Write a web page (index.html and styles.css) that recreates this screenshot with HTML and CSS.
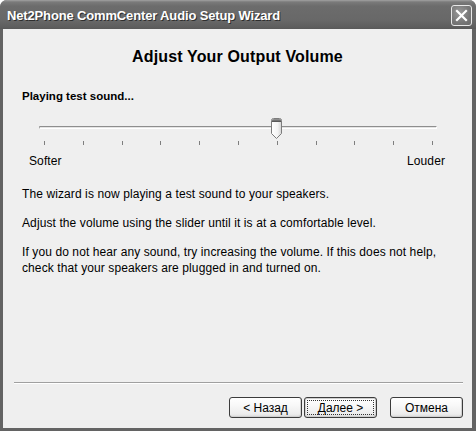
FILE: index.html
```html
<!DOCTYPE html>
<html>
<head>
<meta charset="utf-8">
<link rel="stylesheet" href="styles.css">
</head>
<body>
<div class="window">
  <div class="titlebar">
    <span class="title">Net2Phone CommCenter Audio Setup Wizard</span>
    <span class="close">
      <svg width="13" height="13" viewBox="0 0 13 13"><path d="M2 2 L11 11 M11 2 L2 11" stroke="#fff" stroke-width="2.2" stroke-linecap="square"/></svg>
    </span>
  </div>
  <div class="client">
    <h1 class="heading">Adjust Your Output Volume</h1>
    <div class="status">Playing test sound...</div>
    <div class="slider">
      <div class="track"></div>
      <div class="ticks">
        <span></span><span></span><span></span><span></span><span></span><span></span><span></span><span></span><span></span><span></span><span></span>
      </div>
      <svg class="thumb" width="11" height="21" viewBox="0 0 11 21">
        <defs>
          <linearGradient id="cap" x1="0" y1="0" x2="0" y2="1">
            <stop offset="0" stop-color="#9a9a9a"/>
            <stop offset="1" stop-color="#4c4c4c"/>
          </linearGradient>
          <linearGradient id="body" x1="0" y1="0" x2="1" y2="0">
            <stop offset="0" stop-color="#ffffff"/>
            <stop offset="0.6" stop-color="#f4f4f4"/>
            <stop offset="1" stop-color="#d4d4d4"/>
          </linearGradient>
        </defs>
        <path d="M0.5 2.5 Q0.5 0.5 2.5 0.5 H8.5 Q10.5 0.5 10.5 2.5 V15.5 L5.5 20.5 L0.5 15.5 Z" fill="url(#body)" stroke="#7c7c7c"/>
        <path d="M1 2.5 Q1 1 2.5 1 H8.5 Q10 1 10 2.5 V4 H1 Z" fill="url(#cap)"/>
      </svg>
    </div>
    <div class="scale-labels">
      <span>Softer</span>
      <span>Louder</span>
    </div>
    <p class="text">The wizard is now playing a test sound to your speakers.</p>
    <p class="text">Adjust the volume using the slider until it is at a comfortable level.</p>
    <p class="text">If you do not hear any sound, try increasing the volume. If this does not help,<br>check that your speakers are plugged in and turned on.</p>
    <div class="footer">
      <div class="separator"></div>
      <div class="buttons">
        <button class="btn">&lt; Назад</button>
        <button class="btn focused"><span class="focus">Далее &gt;</span></button>
        <button class="btn cancel">Отмена</button>
      </div>
    </div>
  </div>
</div>
</body>
</html>
```

FILE: styles.css
```css
* { box-sizing: border-box; }
html, body { margin: 0; padding: 0; background: #ffffff; }
body { width: 476px; height: 431px; overflow: hidden; font-family: "Liberation Sans", Arial, sans-serif; }

.window {
  width: 476px;
  height: 431px;
  display: flex;
  flex-direction: column;
  background: #636363;
  border-radius: 7px 7px 0 0;
  overflow: hidden;
}

.titlebar {
  height: 29px;
  flex: none;
  display: flex;
  align-items: center;
  justify-content: space-between;
  padding: 0 4px 0 7px;
  background: linear-gradient(to bottom, #a2a2a2 0, #7a7a7a 2px, #6c6c6c 6px, #686868 20px, #5e5e5e 27px, #585858 29px);
}

.title {
  color: #ffffff;
  font-weight: bold;
  font-size: 13px;
  letter-spacing: -0.15px;
  text-shadow: 1px 1px 0 #2e2e2e;
  padding-top: 1px;
}

.close {
  width: 21px;
  height: 21px;
  border: 1px solid #e8e8e8;
  border-radius: 3px;
  background: radial-gradient(circle at 40% 35%, #9a9a9a 0, #777777 60%, #6a6a6a 100%);
  display: flex;
  align-items: center;
  justify-content: center;
  margin-top: 2px;
}

.client {
  flex: 1;
  margin: 0 4px 3px 3px;
  background: #efefef;
  display: flex;
  flex-direction: column;
  color: #000;
}

.heading {
  margin: 18px 0 0 0;
  font-size: 16px;
  line-height: 20px;
  font-weight: bold;
  text-align: center;
  letter-spacing: 0.15px;
}

.status {
  margin: 22px 0 0 19px;
  font-size: 11.5px;
  line-height: 14px;
  font-weight: bold;
}

.slider {
  position: relative;
  margin-top: 12px;
  padding-top: 11px;
  height: 30px;
}

.track {
  margin-left: 36px;
  width: 398px;
  height: 3px;
  border-top: 1px solid #8e8e8e;
  border-left: 1px solid #a8a8a8;
  border-bottom: 1px solid #ffffff;
  border-right: 1px solid #ffffff;
  border-radius: 1px;
  background: #e4e4e4;
}

.ticks {
  margin: 12px 0 0 41px;
  width: 389px;
  height: 4px;
  display: flex;
  justify-content: space-between;
}

.ticks span {
  width: 1px;
  height: 4px;
  background: #7e7e7e;
}

.thumb {
  position: absolute;
  left: 268px;
  top: 3px;
  display: block;
}

.scale-labels {
  margin: 9px 27px 0 26px;
  display: flex;
  justify-content: space-between;
  font-size: 12px;
  line-height: 14px;
  letter-spacing: 0.1px;
}

.text {
  margin: 18px 0 0 19px;
  font-size: 12px;
  line-height: 16px;
  letter-spacing: 0.1px;
}

.text + .text { margin-top: 13px; }

.footer {
  margin-top: auto;
  display: flex;
  flex-direction: column;
}

.separator {
  margin: 0 9px 0 11px;
  height: 2px;
  border-top: 1px solid #a0a0a0;
  border-bottom: 1px solid #ffffff;
}

.buttons {
  display: flex;
  justify-content: flex-end;
  padding: 0 9px 0 0;
  margin: 13px 0 10px 0;
  gap: 2px;
}

.btn {
  width: 73px;
  height: 21px;
  padding: 0;
  border: 1px solid #3c3c3c;
  border-radius: 3px;
  background: linear-gradient(to bottom, #ffffff 0, #f8f8f8 40%, #ececec 85%, #d8d8d8 100%);
  font-family: "Liberation Sans", Arial, sans-serif;
  font-size: 12px;
  color: #000;
  display: flex;
  align-items: center;
  justify-content: center;
  box-shadow: inset -1px -1px 0 #d0d0d0;
}

.btn.focused {
  padding: 2px;
  box-shadow: inset 0 0 0 1px #cfcfcf, inset -1px -1px 0 #bcbcbc;
}

.focus {
  width: 100%;
  height: 100%;
  border: 1px dotted #333;
  display: flex;
  align-items: center;
  justify-content: center;
}

.btn.cancel { margin-left: 11px; }
```
